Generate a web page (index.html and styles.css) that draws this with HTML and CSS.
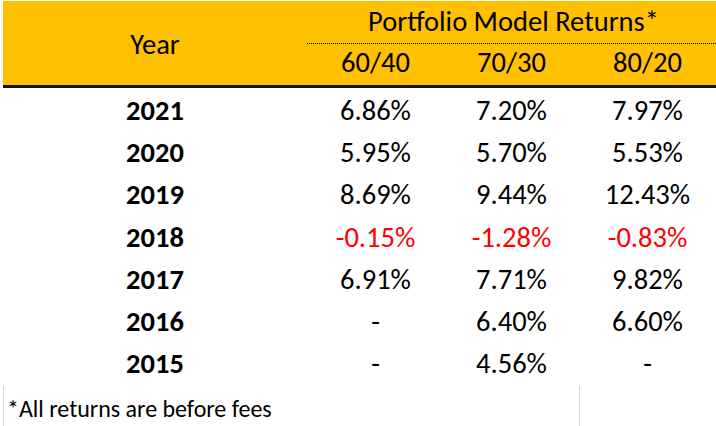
FILE: index.html
```html
<!DOCTYPE html>
<html lang="en">
<head>
<meta charset="utf-8">
<title>Portfolio Model Returns</title>
<link rel="stylesheet" href="styles.css">
</head>
<body>
<div class="sheet">
  <div class="head">
    <div class="year-h">Year</div>
    <div class="title">Portfolio Model Returns*</div>
    <div class="mix">60/40</div>
    <div class="mix">70/30</div>
    <div class="mix">80/20</div>
  </div>
  <div class="body">
    <div class="row"><div class="yr">2021</div><div class="v">6.86%</div><div class="v">7.20%</div><div class="v">7.97%</div></div>
    <div class="row"><div class="yr">2020</div><div class="v">5.95%</div><div class="v">5.70%</div><div class="v">5.53%</div></div>
    <div class="row"><div class="yr">2019</div><div class="v">8.69%</div><div class="v">9.44%</div><div class="v">12.43%</div></div>
    <div class="row"><div class="yr">2018</div><div class="v neg">-0.15%</div><div class="v neg">-1.28%</div><div class="v neg">-0.83%</div></div>
    <div class="row"><div class="yr">2017</div><div class="v">6.91%</div><div class="v">7.71%</div><div class="v">9.82%</div></div>
    <div class="row"><div class="yr">2016</div><div class="v">-</div><div class="v">6.40%</div><div class="v">6.60%</div></div>
    <div class="row"><div class="yr">2015</div><div class="v">-</div><div class="v">4.56%</div><div class="v">-</div></div>
  </div>
  <div class="foot">
    <div class="note">*All returns are before fees</div>
  </div>
</div>
</body>
</html>
```

FILE: styles.css
```css
html, body {
  margin: 0;
  padding: 0;
  background: #ffffff;
}

body {
  width: 716px;
  height: 426px;
  overflow: hidden;
  font-family: Carlito, Lato, "Liberation Sans", sans-serif;
  color: #000000;
}

.sheet {
  padding-top: 1px;
  padding-left: 3px;
}

.head {
  display: grid;
  grid-template-columns: 304px 137px 135px 137px;
  grid-template-rows: 43px 41px;
  background: #ffc000;
  border-bottom: 3px solid #111111;
  font-size: 28.5px;
}

.year-h {
  grid-row: 1 / 3;
  grid-column: 1;
  display: flex;
  align-items: center;
  justify-content: center;
  padding-top: 2px;
}

.title {
  grid-column: 2 / 5;
  grid-row: 1;
  text-align: center;
  line-height: 42px;
  border-bottom: 1px dotted #000000;
  box-sizing: border-box;
  padding-left: 4px;
}

.mix {
  grid-row: 2;
  text-align: center;
  line-height: 38px;
}

.body {
  padding-top: 2px;
}

.row {
  display: grid;
  grid-template-columns: 304px 137px 135px 137px;
  height: 42.2px;
  line-height: 42px;
  font-size: 28.5px;
  text-align: center;
}

.yr {
  font-weight: 700;
}

.neg {
  color: #ff0000;
}

.foot {
  display: grid;
  grid-template-columns: 577px;
  padding-top: 1px;
  height: 40px;
}

.note {
  border-left: 1px solid #d9d9d9;
  border-right: 1px solid #d9d9d9;
  font-size: 24px;
  line-height: 34px;
  padding-top: 6px;
  padding-left: 3px;
}
```
